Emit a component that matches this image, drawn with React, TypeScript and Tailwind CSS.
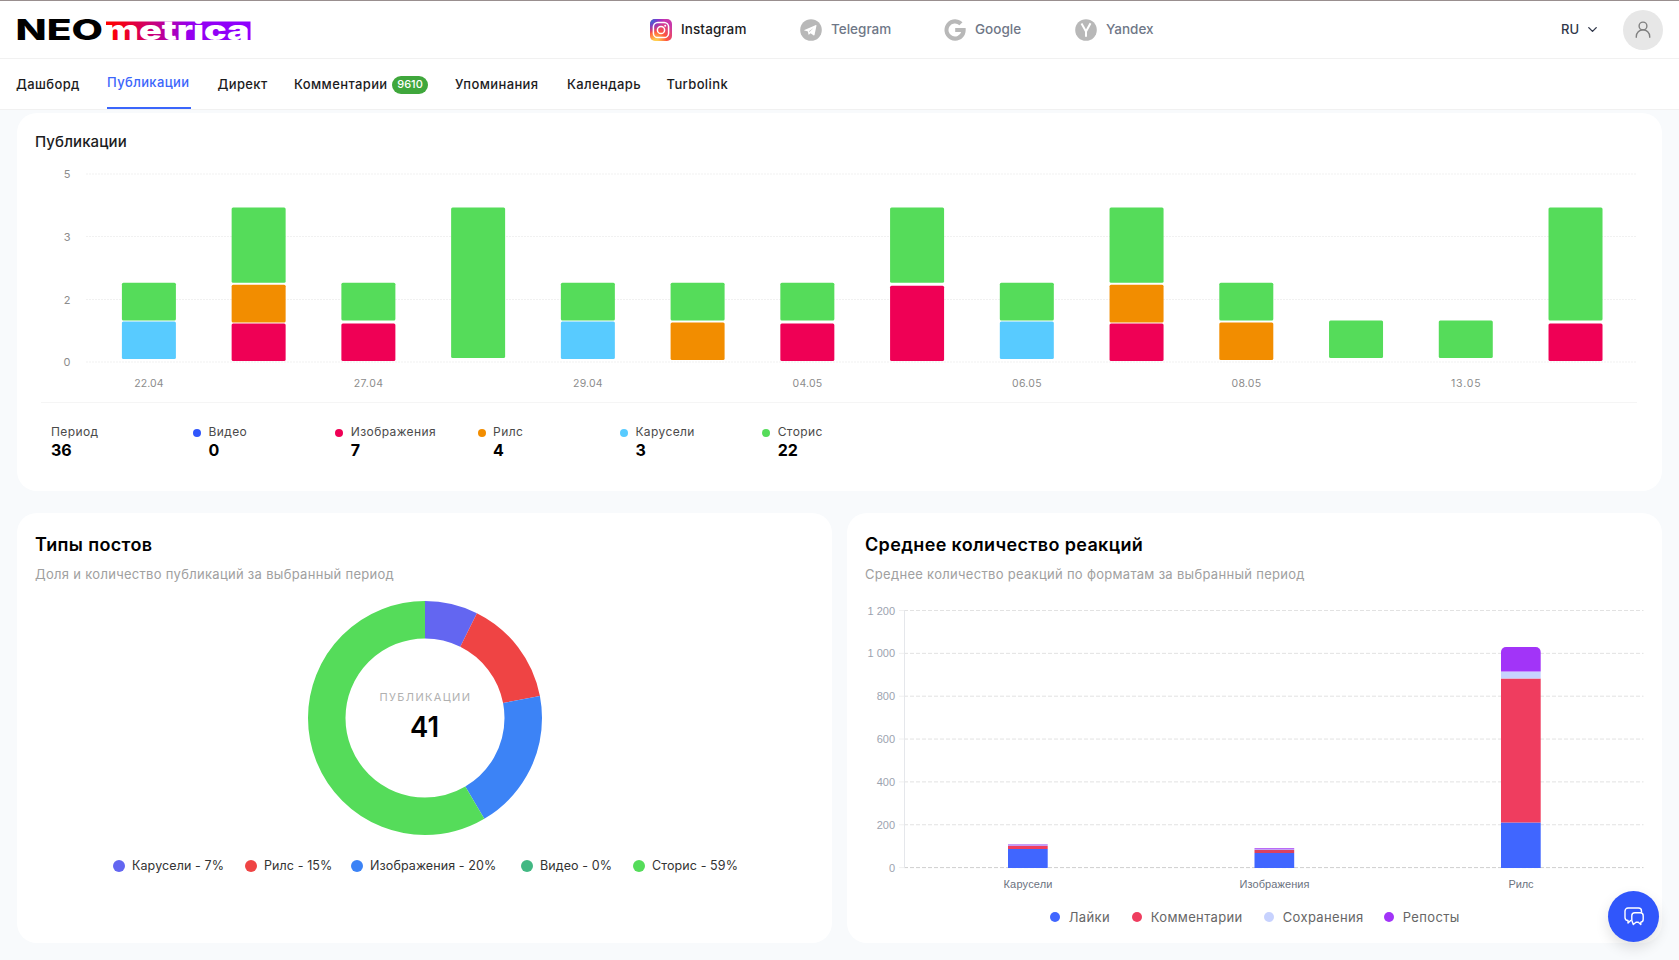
import { ChevronDown } from 'lucide-react';

const tabs = [
  { label: 'Дашборд', className: 'w-[64px]' },
  { label: 'Публикации', className: 'w-[83.5px]', active: true },
  { label: 'Директ', className: 'w-[49.5px]' },
  { label: 'Комментарии', className: 'w-[93px]', badge: '9610' },
  { label: 'Упоминания', className: 'w-[85px]' },
  { label: 'Календарь', className: 'w-[72.5px]' },
  { label: 'Turbolink', className: 'w-[62px]' },
];

const COLORS = {
  video: '#3056fb',
  image: '#ef0055',
  reels: '#f28d00',
  carousel: '#58cbff',
  stories: '#55dc5a',
};

type Kind = keyof typeof COLORS;

// Bottom edge of the first segment, each series sits one pixel higher
const BASE: Record<Kind, number> = { video: 362, image: 361, reels: 360, carousel: 359, stories: 358 };

const days: { date?: string; parts: [Kind, number][] }[] = [
  { date: '22.04', parts: [['carousel', 1], ['stories', 1]] },
  { parts: [['image', 1], ['reels', 1], ['stories', 2]] },
  { date: '27.04', parts: [['image', 1], ['stories', 1]] },
  { parts: [['stories', 4]] },
  { date: '29.04', parts: [['carousel', 1], ['stories', 1]] },
  { parts: [['reels', 1], ['stories', 1]] },
  { date: '04.05', parts: [['image', 1], ['stories', 1]] },
  { parts: [['image', 2], ['stories', 2]] },
  { date: '06.05', parts: [['carousel', 1], ['stories', 1]] },
  { parts: [['image', 1], ['reels', 1], ['stories', 2]] },
  { date: '08.05', parts: [['reels', 1], ['stories', 1]] },
  { parts: [['stories', 1]] },
  { date: '13.05', parts: [['stories', 1]] },
  { parts: [['image', 1], ['stories', 3]] },
];

const totals = [
  { label: 'Видео', value: 0, dot: 'bg-[#3056fb]' },
  { label: 'Изображения', value: 7, dot: 'bg-[#ef0055]' },
  { label: 'Рилс', value: 4, dot: 'bg-[#f28d00]' },
  { label: 'Карусели', value: 3, dot: 'bg-[#58cbff]' },
  { label: 'Сторис', value: 22, dot: 'bg-[#55dc5a]' },
];

const postTypes = [
  { label: 'Карусели - 7%', count: 3, color: '#6366f1', dot: 'bg-[#6366f1]', width: 'w-[92px]' },
  { label: 'Рилс - 15%', count: 6, color: '#ef4444', dot: 'bg-[#ef4444]', width: 'w-[66px]' },
  { label: 'Изображения - 20%', count: 8, color: '#3c83f6', dot: 'bg-[#3c83f6]', width: 'w-[130px]' },
  { label: 'Видео - 0%', count: 0, color: '#42b883', dot: 'bg-[#42b883]', width: 'w-[72px]' },
  { label: 'Сторис - 59%', count: 24, color: '#55dc5a', dot: 'bg-[#55dc5a]', width: 'w-[84px]' },
];

const reactions = [
  { label: 'Карусели', width: 49, x: 1008, segments: [['#4066ff', 849, 868], ['#ef3d5f', 846, 849], ['#c79cf5', 844, 846]] },
  { label: 'Изображения', width: 70, x: 1254.5, segments: [['#4066ff', 853, 868], ['#d9415f', 850, 853], ['#b9a0f0', 849.3, 850], ['#b96bf7', 848, 849.3]] },
  { label: 'Рилс', width: 25, x: 1501, segments: [['#4066ff', 822.5, 868], ['#ef3d5f', 678.5, 822.5], ['#c7d2fe', 671.5, 678.5]] },
] as { label: string; width: number; x: number; segments: [string, number, number][] }[];

const reactionLegend = [
  { label: 'Лайки', dot: 'bg-[#4066ff]', width: 'w-[42px]' },
  { label: 'Комментарии', dot: 'bg-[#ef3d5f]', width: 'w-[92px]' },
  { label: 'Сохранения', dot: 'bg-[#c7d2fe]', width: 'w-[80px]' },
  { label: 'Репосты', dot: 'bg-[#a234f8]', width: 'w-[56px]' },
];

const Logo = () => (
  <svg width="240" height="44" viewBox="17 8 240 44" className="block overflow-visible">
    <defs>
      <linearGradient id="logo" x1="0" x2="1">
        <stop offset="0" stopColor="#ff0000" />
        <stop offset="0.12" stopColor="#f2001c" />
        <stop offset="0.58" stopColor="#9500f0" />
        <stop offset="1" stopColor="#8c00ff" />
      </linearGradient>
    </defs>
    <text x="15.5" y="39.8" fontFamily="Inter, sans-serif" fontWeight="800" fontSize="28" textLength="87.5" lengthAdjust="spacingAndGlyphs">NEO</text>
    <rect x="106" y="21.5" width="144.5" height="18.5" fill="url(#logo)" />
    <text x="103.500" y="40.300" fontFamily="Inter, sans-serif" fontWeight="900" fontSize="27" fill="#fff" textLength="146" lengthAdjust="spacingAndGlyphs">metrica</text>
  </svg>
);

const InstagramIcon = () => (
  <svg width="22" height="22" viewBox="0 0 22 22">
    <defs>
      <radialGradient id="ig" cx="0.27" cy="1.05" r="1">
        <stop offset="0" stopColor="#ffdd55" />
        <stop offset="0.15" stopColor="#ffc34a" />
        <stop offset="0.5" stopColor="#ff543e" />
        <stop offset="1" stopColor="#c837ab" />
      </radialGradient>
      <radialGradient id="ig2" cx="0" cy="0" r="0.65">
        <stop offset="0" stopColor="#3771c8" />
        <stop offset="0.25" stopColor="#4a5ed0" />
        <stop offset="1" stopColor="#6600ff" stopOpacity="0" />
      </radialGradient>
    </defs>
    <rect width="22" height="22" rx="5" fill="url(#ig)" />
    <rect width="22" height="22" rx="5" fill="url(#ig2)" />
    <g fill="none" stroke="#fff" strokeWidth="1.5">
      <rect x="3.4" y="3.4" width="15.2" height="15.2" rx="4.4" />
      <circle cx="11" cy="11" r="3.6" />
    </g>
    <circle cx="15.2" cy="6.8" r="1" fill="#fff" />
  </svg>
);

const TelegramIcon = () => (
  <svg width="22" height="22" viewBox="0 0 22 22">
    <circle cx="11" cy="11" r="10.8" fill="#b8b8b8" />
    <path d="M4.4 10.9 15.4 6.2c.7-.3 1.2.1 1 .9l-1.8 8.7c-.1.7-.7.9-1.2.5l-2.8-2.1-1.5 1.4c-.4.3-.7.1-.7-.3l-.5-2.8-3.4-1c-.5-.1-.5-.4-.1-.6z" fill="#fff" />
    <path d="m9 12.300 4.500-3.300-3.800 3.800z" fill="#b8b8b8" />
  </svg>
);

const GoogleIcon = () => (
  <svg width="22" height="22" viewBox="0 0 22 22">
    <path d="M11.2 9h10.4c.9 7.300-3.700 12.700-10.400 12.700A10.700 10.700 0 1 1 18.500 3.200l-3.100 3A6.500 6.500 0 1 0 17.200 13h-6z" fill="#b8b8b8" />
  </svg>
);

const YandexIcon = () => (
  <svg width="22" height="22" viewBox="0 0 22 22">
    <circle cx="11" cy="11" r="10.8" fill="#b8b8b8" />
    <path d="M6.500 4.600 11 12.400v5.400M15.500 4.200 11 12.400" fill="none" stroke="#fff" strokeWidth="2" />
  </svg>
);

const Header = () => (
  <header className="flex h-[58px] shrink-0 items-center border-b border-[#f1f1f1] bg-white pl-[17px] pr-4">
    <div className="w-[633px]">
      <Logo />
    </div>
    <nav className="flex items-center text-[13.5px] font-medium text-[#6f7787]">
      <div className="flex w-[150px] items-center gap-[9px] text-[#1c1c1e]">
        <InstagramIcon />
        <span className="tracking-[0.1px]">Instagram</span>
      </div>
      <div className="flex w-[144px] items-center gap-[9px]">
        <TelegramIcon />
        <span>Telegram</span>
      </div>
      <div className="flex w-[131px] items-center gap-[9px]">
        <GoogleIcon />
        <span>Google</span>
      </div>
      <div className="flex items-center gap-[9px]">
        <YandexIcon />
        <span>Yandex</span>
      </div>
    </nav>
    <div className="ml-auto flex items-center">
      <span className="text-[13px] font-medium text-[#30374a]">RU</span>
      <ChevronDown className="ml-1.5 mr-[23px] text-[#30374a]" size={15} strokeWidth={2.2} />
      <div className="flex size-10 items-center justify-center rounded-full bg-[#e7e7e7]">
        <svg width="16" height="18" viewBox="0 0 16 18" fill="none" stroke="#808080" strokeWidth="1.4">
          <circle cx="8" cy="5" r="3.900" />
          <path d="M1.300 16.800V15.500a6.700 6.700 0 0 1 13.400 0v1.300" />
        </svg>
      </div>
    </div>
  </header>
);

const Tabs = () => (
  <nav className="flex h-[51px] shrink-0 gap-[27px] border-b border-[#f1f1f1] bg-white pl-4 text-[13px] font-medium tracking-[0.38px] text-[#1c1c1e]">
    {tabs.map((tab) => (
      <div
        key={tab.label}
        className={
          tab.active
            ? 'flex h-[50px] items-center border-b-2 border-[#3b66fb] text-[#3b66fb]'
            : 'flex h-[51px] items-center'
        }
      >
        <span className={`whitespace-nowrap ${tab.className}`}>{tab.label}</span>
        {tab.badge && (
          <span className="ml-[5px] flex h-[18px] w-9 items-center justify-center rounded-full bg-[#3fa73c] text-[11px] tracking-normal text-white">
            {tab.badge}
          </span>
        )}
      </div>
    ))}
  </nav>
);

const PublicationsCard = () => (
  <section className="flex h-[378px] shrink-0 flex-col rounded-[20px] bg-white">
    <h2 className="h-[44px] pl-[18px] pt-[18px] text-[15px] leading-[22px] font-medium tracking-[0.1px] text-[#1c1c1e]">Публикации</h2>
    <svg width="1645" height="246" viewBox="17 157 1645 246" className="block shrink-0" fontFamily="Inter, sans-serif">
      {[['5', 174], ['3', 236.5], ['2', 299.5], ['0', 362]].map(([label, y]) => (
        <g key={label}>
          <text x="70.500" y={Number(y) + 4} textAnchor="end" fontSize="11" fill="#8c8c8c">{label}</text>
          <line x1="86" x2="1637" y1={y} y2={y} stroke="#f1f1f1" strokeDasharray="2 1" />
        </g>
      ))}
      {days.map((day, i) => {
        const x = 121.900 + i * 109.740;
        let stacked = 0;
        return (
          <g key={i}>
            {day.parts.map(([kind, count]) => {
              stacked += count;
              return (
                <rect key={kind} x={x} y={BASE[kind] - stacked * 37.600} width="54" height={count * 37.600} rx="1.500" fill={COLORS[kind]} />
              );
            })}
            {day.date && (
              <text x={x + 27} y="387" textAnchor="middle" fontSize="10.500" fill="#8c8c8c" textLength="29.500">{day.date}</text>
            )}
          </g>
        );
      })}
      <line x1="41" x2="1637" y1="402.500" y2="402.500" stroke="#f5f5f5" />
    </svg>
    <div className="flex pl-[34px] pt-[19.500px] text-[12px] leading-[18px] tracking-[0.4px] text-[#4a4a4a]">
      <div className="w-[142px]">
        <div>Период</div>
        <div className="text-[16px] font-bold tracking-normal text-black">36</div>
      </div>
      {totals.map((item) => (
        <div key={item.label} className="flex w-[142.300px] gap-[7.500px]">
          <span className={`mt-[6.500px] size-2 shrink-0 rounded-full ${item.dot}`} />
          <div>
            <div>{item.label}</div>
            <div className="text-[16px] font-bold tracking-normal text-black">{item.value}</div>
          </div>
        </div>
      ))}
    </div>
  </section>
);

const Donut = () => {
  const radius = 98.250;
  const length = 2 * Math.PI * radius;
  let offset = 0;
  return (
    <svg width="236" height="236" viewBox="-118 -118 236 236" className="block" fontFamily="Inter, sans-serif">
      <g transform="rotate(-90)" fill="none" strokeWidth="37.500">
        {postTypes.map((type) => {
          const part = (type.count / 41) * length;
          const start = offset;
          offset += part;
          return part > 0 ? (
            <circle key={type.label} r={radius} stroke={type.color} strokeDasharray={`${part} ${length - part}`} strokeDashoffset={-start} />
          ) : null;
        })}
      </g>
      <text x="-45.500" y="-17.500" fontSize="11" fill="#b0b0b0" textLength="90.500">ПУБЛИКАЦИИ</text>
      <text x="-0.500" y="18.500" textAnchor="middle" fontSize="28" fontWeight="600" textLength="29" lengthAdjust="spacingAndGlyphs">41</text>
    </svg>
  );
};

const CardTitle = ({ title, text }: { title: string; text: string }) => (
  <div className="pl-[18px] pt-5">
    <h2 className="text-[18px] leading-6 font-semibold tracking-[0.35px] text-black">{title}</h2>
    <p className="mt-[7px] text-[13px] leading-5 tracking-[0.3px] text-[#a0a0a0]">{text}</p>
  </div>
);

const PostTypesCard = () => (
  <section className="flex w-[815px] flex-col rounded-[20px] bg-white">
    <CardTitle title="Типы постов" text="Доля и количество публикаций за выбранный период" />
    <div className="mt-4 flex justify-center">
      <Donut />
    </div>
    <div className="mt-5 flex justify-center gap-[21px] text-[12.500px] leading-5 text-[#333]">
      {postTypes.map((type) => (
        <div key={type.label} className="flex items-center gap-[7px]">
          <span className={`size-3 rounded-full ${type.dot}`} />
          <span className={`whitespace-nowrap tracking-[0.100px] ${type.width}`}>{type.label}</span>
        </div>
      ))}
    </div>
  </section>
);

const ReactionsCard = () => (
  <section className="flex w-[815px] flex-col rounded-[20px] bg-white">
    <CardTitle title="Среднее количество реакций" text="Среднее количество реакций по форматам за выбранный период" />
    <svg width="815" height="300" viewBox="847 596 815 300" className="mt-3 block" fontFamily="Liberation Sans, Arial, sans-serif">
      {['1 200', '1 000', '800', '600', '400', '200', '0'].map((label, i) => {
        const y = 610.500 + i * 42.850;
        return (
          <g key={label}>
            <text x="895" y={y + 4} textAnchor="end" fontSize="11" fill="#9ca3af">{label}</text>
            <line x1="899" x2="904" y1={y} y2={y} stroke="#f0f0f0" />
            <line x1="904" x2="1643.500" y1={y} y2={y} stroke={label === '0' ? '#cfcfcf' : '#e2e2e2'} strokeDasharray="4 2" />
          </g>
        );
      })}
      <line x1="904.500" x2="904.500" y1="610" y2="868" stroke="#e5e7eb" />
      {reactions.map((item) => (
        <g key={item.label}>
          {item.segments.map(([color, top, bottom]) => (
            <rect key={top} x={item.x} y={top} width="39.700" height={bottom - top} fill={color} />
          ))}
          <text x={item.x + 20} y="888" textAnchor="middle" fontSize="11" fill="#6b7280" textLength={item.width}>{item.label}</text>
        </g>
      ))}
      <path d="M1501 671.500V652a5 5 0 0 1 5-5h29.700a5 5 0 0 1 5 5v19.500z" fill="#a234f8" />
    </svg>
    <div className="mt-[11px] flex justify-center gap-[21.500px] text-[13px] leading-5 tracking-[0.350px] text-[#666]">
      {reactionLegend.map((item) => (
        <div key={item.label} className="flex items-center gap-[9px]">
          <span className={`size-[9.500px] rounded-full ${item.dot}`} />
          <span className={`whitespace-nowrap ${item.width}`}>{item.label}</span>
        </div>
      ))}
    </div>
  </section>
);

const ChatButton = () => (
  <button
    className="absolute left-[1608px] top-[890px] flex size-[51px] items-center justify-center rounded-full bg-[#3056fb] shadow-[0_6px_14px_rgba(0,0,0,0.12)]"
    aria-label="Чат"
  >
    <svg width="20" height="19" viewBox="0 0 20 19" fill="none" stroke="#fff" strokeWidth="1.400" strokeLinejoin="round" strokeLinecap="round">
      <path d="M17.500 5V4a3 3 0 0 0-3-3H4a3 3 0 0 0-3 3v6.500a3 3 0 0 0 3 3V16l2.700-2.500" />
      <path d="M10.800 5.700h5.400a3 3 0 0 1 3 3v3.500a3 3 0 0 1-2.400 3v2.300l-2.500-2.300H12l-2.700 2.300-1-2.800a3 3 0 0 1-.5-1.500V8.700a3 3 0 0 1 3-3z" />
    </svg>
  </button>
);

const App = () => {
  return (
    <div className="relative flex h-[960px] w-[1679px] flex-col overflow-hidden border-t border-[#998f8f] bg-[#f8fafc] font-['Inter',sans-serif]">
      <Header />
      <Tabs />
      <main className="flex flex-col gap-[22px] px-[17px] pt-[3px]">
        <PublicationsCard />
        <div className="flex h-[430px] justify-between">
          <PostTypesCard />
          <ReactionsCard />
        </div>
      </main>
      <ChatButton />
    </div>
  );
};

export default App;
